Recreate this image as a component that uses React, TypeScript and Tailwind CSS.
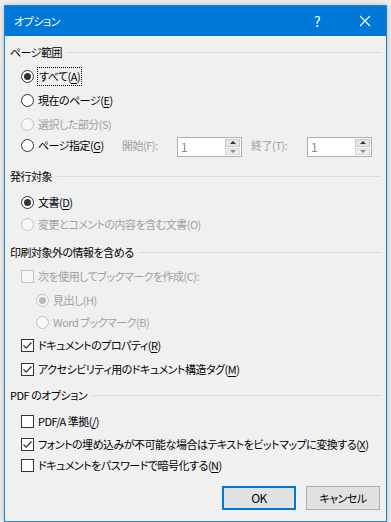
import React from "react";

const Radio = ({checked, disabled}: {checked?: boolean; disabled?: boolean}) => (
    <span
        className={`w-[13px] h-[13px] rounded-full border flex items-center justify-center shrink-0 ${disabled ? "border-[#c4c4c4] bg-[#f7f7f7]" : "border-[#333333] bg-white"}`}
    >
        {checked && (
            <span className={`w-[7px] h-[7px] rounded-full ${disabled ? "bg-[#b8b8b8]" : "bg-[#333333]"}`}/>
        )}
    </span>
);

const Check = ({checked, disabled}: {checked?: boolean; disabled?: boolean}) => (
    <span
        className={`w-[13px] h-[13px] border flex items-center justify-center shrink-0 ${disabled ? "border-[#c4c4c4] bg-[#f7f7f7]" : "border-[#333333] bg-white"}`}
    >
        {checked && (
            <svg width="11" height="11" viewBox="0 0 11 11">
                <polyline points="1.5,5.5 4.2,8.2 9.5,2.5" fill="none" stroke="#333333" strokeWidth="1.2"/>
            </svg>
        )}
    </span>
);

const Key = ({k}: {k: string}) => (
    <>(<span className="underline underline-offset-2">{k}</span>)</>
);

const Group = ({label, mt}: {label: string; mt: string}) => (
    <div className={`${mt} h-[20px] flex items-center pl-[5px] pr-[5px] gap-[5px]`}>
        <span className="text-black whitespace-nowrap">{label}</span>
        <span className="flex-1 h-px bg-[#dcdcdc]"/>
    </div>
);

const Spin = () => (
    <div className="w-[65px] h-[20px] border border-[#adadad] bg-white flex items-center justify-between pl-[3px] pr-[1px]">
        <span className="text-[#8a8a8a] text-[12px]">1</span>
        <div className="flex flex-col w-[15px] h-[16px] gap-px">
            <span className="flex-1 bg-[#e5e5e5] border border-[#c8c8c8] flex items-center justify-center">
                <span className="w-0 h-0 border-l-[3px] border-r-[3px] border-b-[3px] border-l-transparent border-r-transparent border-b-[#333333]"/>
            </span>
            <span className="flex-1 bg-[#ececec] border border-[#d8d8d8] flex items-center justify-center">
                <span className="w-0 h-0 border-l-[3px] border-r-[3px] border-t-[3px] border-l-transparent border-r-transparent border-t-[#8a8a8a]"/>
            </span>
        </div>
    </div>
);

const App = () => {
    return (
        <div className="w-[391px] h-[522px] bg-[#f0f0f0] pl-[4px] pt-[5px] overflow-hidden font-['Noto_Sans_CJK_JP',sans-serif] text-[11px] tracking-[-0.5px] [font-feature-settings:'palt'] leading-none">
            <div className="w-[383px] h-[517px] flex flex-col border border-[#1883d7] bg-[#f0f0f0] shadow-[0_0_6px_rgba(0,0,0,0.25)]">
                <div className="h-[30px] shrink-0 bg-[#0078d7] flex items-center text-white pl-[9px]">
                    <span className="text-[11px]">オプション</span>
                    <span className="ml-auto text-[14px] w-[10px] mr-[35px]">?</span>
                    <svg width="12" height="12" viewBox="0 0 12 12" className="mr-[15px]">
                        <path d="M1 1 L11 11 M11 1 L1 11" stroke="white" strokeWidth="1.1"/>
                    </svg>
                </div>

                <Group label="ページ範囲" mt="mt-[6px]"/>
                <div className="mt-[4px] h-[20px] flex items-center pl-[16px] gap-[3px]">
                    <Radio checked/>
                    <span className="border border-dotted border-black px-[1px] py-[3px]">すべて<Key k="A"/></span>
                </div>
                <div className="mt-[4px] h-[20px] flex items-center pl-[16px] gap-[4px]">
                    <Radio/>
                    <span>現在のページ<Key k="E"/></span>
                </div>
                <div className="mt-[4px] h-[20px] flex items-center pl-[16px] gap-[4px] text-[#a0a0a0]">
                    <Radio disabled/>
                    <span>選択した部分(S)</span>
                </div>
                <div className="mt-[3px] h-[20px] flex items-center pl-[16px]">
                    <div className="w-[101px] flex items-center gap-[4px] mb-[4px]">
                        <Radio/>
                        <span>ページ指定<Key k="G"/></span>
                    </div>
                    <span className="mb-[4px] text-[#a0a0a0] w-[55px]">開始(F):</span>
                    <Spin/>
                    <span className="ml-[9px] mb-[4px] text-[#a0a0a0] w-[56px]">終了(T):</span>
                    <Spin/>
                </div>

                <Group label="発行対象" mt="mt-[9px]"/>
                <div className="mt-[6px] h-[20px] flex items-center pl-[16px] gap-[4px]">
                    <Radio checked/>
                    <span>文書<Key k="D"/></span>
                </div>
                <div className="mt-[2px] h-[20px] flex items-center pl-[16px] gap-[4px] text-[#a0a0a0]">
                    <Radio disabled/>
                    <span>変更とコメントの内容を含む文書(O)</span>
                </div>

                <Group label="印刷対象外の情報を含める" mt="mt-[8px]"/>
                <div className="mt-[4px] h-[20px] flex items-center pl-[16px] gap-[4px] text-[#a0a0a0]">
                    <Check disabled/>
                    <span>次を使用してブックマークを作成(C):</span>
                </div>
                <div className="mt-[4px] h-[20px] flex items-center pl-[31px] gap-[4px] text-[#a0a0a0]">
                    <Radio checked disabled/>
                    <span>見出し(H)</span>
                </div>
                <div className="mt-[2px] h-[20px] flex items-center pl-[31px] gap-[4px] text-[#a0a0a0]">
                    <Radio disabled/>
                    <span>Word ブックマーク(B)</span>
                </div>
                <div className="mt-[3px] h-[20px] flex items-center pl-[16px] gap-[4px]">
                    <Check checked/>
                    <span>ドキュメントのプロパティ<Key k="R"/></span>
                </div>
                <div className="mt-[4px] h-[20px] flex items-center pl-[16px] gap-[4px]">
                    <Check checked/>
                    <span>アクセシビリティ用のドキュメント構造タグ<Key k="M"/></span>
                </div>

                <Group label="PDF のオプション" mt="mt-[6px]"/>
                <div className="mt-[6px] h-[20px] flex items-center pl-[16px] gap-[4px]">
                    <Check/>
                    <span>PDF/A 準拠<Key k="/"/></span>
                </div>
                <div className="mt-[3px] h-[20px] flex items-center pl-[16px] gap-[4px]">
                    <Check checked/>
                    <span className="whitespace-nowrap">フォントの埋め込みが不可能な場合はテキストをビットマップに変換する<Key k="X"/></span>
                </div>
                <div className="mt-[1px] h-[20px] flex items-center pl-[16px] gap-[4px]">
                    <Check/>
                    <span>ドキュメントをパスワードで暗号化する<Key k="N"/></span>
                </div>

                <div className="mt-[11px] flex justify-end gap-[10px] pr-[6px]">
                    <button className="w-[74px] h-[24px] bg-[#e1e1e1] border-2 border-[#0078d7] text-black text-[12px]">OK</button>
                    <button className="w-[74px] h-[24px] bg-[#e1e1e1] border border-[#adadad] text-black text-[11px]">キャンセル</button>
                </div>
            </div>
        </div>
    );
};

export default App;
